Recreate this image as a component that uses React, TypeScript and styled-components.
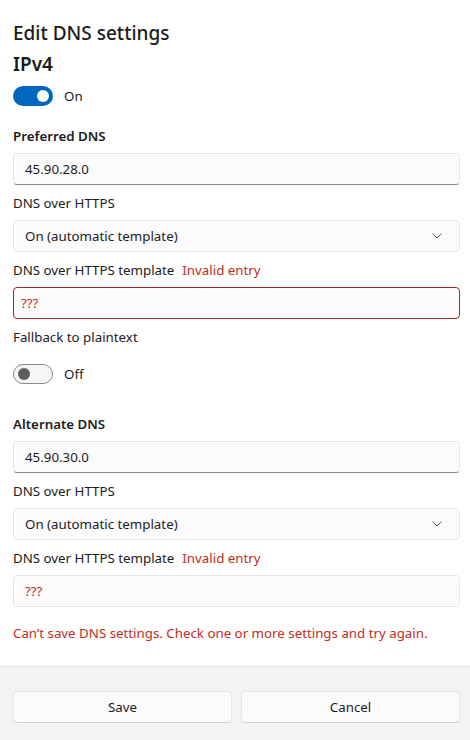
import React from "react";
import styled, { createGlobalStyle } from "styled-components";

const Global = createGlobalStyle`
  html, body { margin: 0; padding: 0; background: #ffffff; }
  body { font-family: "Segoe UI", "Noto Sans", "Open Sans", sans-serif; color: #1b1b1b; }
  * { box-sizing: border-box; }
`;

const Page = styled.div`
  width: 470px;
  min-height: 740px;
  display: flex;
  flex-direction: column;
  background: #ffffff;
`;

const Content = styled.div`
  padding: 19px 10px 0 13px;
  display: flex;
  flex-direction: column;
`;

const Title = styled.h1`
  margin: 0;
  font-size: 19px;
  font-weight: 500;
  line-height: 28px;
`;

const Section = styled.h2`
  margin: 3px 0 0;
  font-size: 19px;
  font-weight: 600;
  line-height: 28px;
`;

const ToggleRow = styled.div<{ $mt: number }>`
  display: flex;
  align-items: center;
  gap: 11px;
  margin-top: ${(p) => p.$mt}px;
  height: 20px;
  font-size: 13.3px;
`;

const Track = styled.div<{ $on: boolean }>`
  width: 40px;
  height: 20px;
  border-radius: 10px;
  display: flex;
  align-items: center;
  padding: 0 4px;
  justify-content: ${(p) => (p.$on ? "flex-end" : "flex-start")};
  background: ${(p) => (p.$on ? "#0067c0" : "#f6f6f6")};
  border: ${(p) => (p.$on ? "none" : "1px solid #8a8a8a")};
`;

const Thumb = styled.div<{ $on: boolean }>`
  width: 12px;
  height: 12px;
  border-radius: 50%;
  background: ${(p) => (p.$on ? "#ffffff" : "#5d5d5d")};
`;

const Strong = styled.div<{ $mt: number }>`
  margin-top: ${(p) => p.$mt}px;
  font-size: 13.3px;
  font-weight: 600;
  line-height: 20px;
`;

const Label = styled.div`
  margin-top: 8px;
  font-size: 13.3px;
  line-height: 20px;
  display: flex;
  gap: 8px;
`;

const Invalid = styled.span`
  color: #c42b1c;
`;

const Box = styled.div<{ $error?: boolean; $red?: boolean; $flat?: boolean }>`
  margin-top: 7px;
  height: 32px;
  border-radius: 4px;
  background: #fbfbfb;
  border: 1px solid ${(p) => (p.$error ? "#a4262c" : "#e5e5e5")};
  border-bottom-color: ${(p) => (p.$error ? "#a4262c" : p.$flat ? "#e5e5e5" : "#8a8a8a")};
  display: flex;
  align-items: center;
  justify-content: space-between;
  padding: 0 ${(p) => (p.$flat ? 12 : 11)}px 0 ${(p) => (p.$error ? 7 : 11)}px;
  font-size: 13.3px;
  color: ${(p) => (p.$red ? "#c42b1c" : "#1b1b1b")};
`;

const Select = styled(Box)`
  border-bottom-color: #e5e5e5;
  padding-right: 17px;
`;

const ErrorMsg = styled.div`
  margin-top: 16px;
  font-size: 13.3px;
  line-height: 20px;
  color: #c42b1c;
`;

const Footer = styled.div`
  margin-top: 23px;
  flex: 1;
  background: #f3f3f3;
  border-top: 1px solid #e5e5e5;
  padding: 24px 10px 0 13px;
  display: grid;
  grid-template-columns: 1fr 1fr;
  gap: 9px;
  align-content: start;
`;

const Button = styled.button`
  height: 32px;
  border-radius: 4px;
  background: #fbfbfb;
  border: 1px solid #e5e5e5;
  border-bottom-color: #d0d0d0;
  font-family: inherit;
  font-size: 13.3px;
  color: #1b1b1b;
`;

const Chevron = () => (
  <svg width="10" height="6" viewBox="0 0 10 6">
    <path d="M0.5 0.5 L5 5 L9.5 0.5" fill="none" stroke="#606060" strokeWidth="1" />
  </svg>
);

const Toggle = ({ on, mt }: { on: boolean; mt: number }) => (
  <ToggleRow $mt={mt}>
    <Track $on={on}>
      <Thumb $on={on} />
    </Track>
    <span>{on ? "On" : "Off"}</span>
  </ToggleRow>
);

export default function App() {
  return (
    <Page>
      <Global />
      <Content>
        <Title>Edit DNS settings</Title>
        <Section>IPv4</Section>
        <Toggle on={true} mt={8} />

        <Strong $mt={20}>Preferred DNS</Strong>
        <Box>45.90.28.0</Box>
        <Label>DNS over HTTPS</Label>
        <Select>
          <span>On (automatic template)</span>
          <Chevron />
        </Select>
        <Label>
          DNS over HTTPS template <Invalid>Invalid entry</Invalid>
        </Label>
        <Box $error $red>???</Box>
        <Label>Fallback to plaintext</Label>
        <Toggle on={false} mt={17} />

        <Strong $mt={30}>Alternate DNS</Strong>
        <Box>45.90.30.0</Box>
        <Label>DNS over HTTPS</Label>
        <Select>
          <span>On (automatic template)</span>
          <Chevron />
        </Select>
        <Label>
          DNS over HTTPS template <Invalid>Invalid entry</Invalid>
        </Label>
        <Box $flat $red>???</Box>

        <ErrorMsg>Can’t save DNS settings. Check one or more settings and try again.</ErrorMsg>
      </Content>
      <Footer>
        <Button>Save</Button>
        <Button>Cancel</Button>
      </Footer>
    </Page>
  );
}
